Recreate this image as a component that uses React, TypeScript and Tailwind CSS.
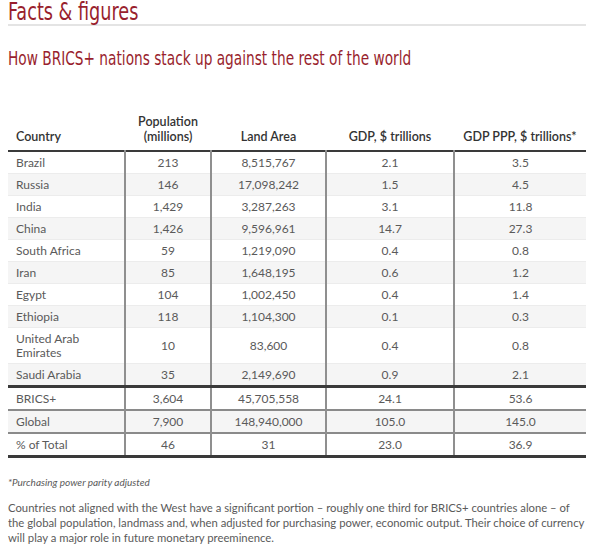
const rows: [string, string, string, string, string][] = [
  ["Brazil", "213", "8,515,767", "2.1", "3.5"],
  ["Russia", "146", "17,098,242", "1.5", "4.5"],
  ["India", "1,429", "3,287,263", "3.1", "11.8"],
  ["China", "1,426", "9,596,961", "14.7", "27.3"],
  ["South Africa", "59", "1,219,090", "0.4", "0.8"],
  ["Iran", "85", "1,648,195", "0.6", "1.2"],
  ["Egypt", "104", "1,002,450", "0.4", "1.4"],
  ["Ethiopia", "118", "1,104,300", "0.1", "0.3"],
  ["United Arab Emirates", "10", "83,600", "0.4", "0.8"],
  ["Saudi Arabia", "35", "2,149,690", "0.9", "2.1"],
];

const totals: [string, string, string, string, string][] = [
  ["BRICS+", "3,604", "45,705,558", "24.1", "53.6"],
  ["Global", "7,900", "148,940,000", "105.0", "145.0"],
  ["% of Total", "46", "31", "23.0", "36.9"],
];

const cell = "border-l-2 border-[#8f8f8f] text-center px-2 py-[3.5px]";

export default function App() {
  return (
    <div className="bg-white w-[602px] h-[544px] overflow-hidden font-['Lato',sans-serif] text-[#5a5a5a]">
      <div className="ml-2 w-[578px]">
        {/* heading */}
        <div className="border-b-2 border-[#e4e4e4] h-[26px]">
          <h1 className="font-['DejaVu_Sans_Condensed',sans-serif] text-[#991f2e] text-[25px] leading-[23px] origin-left scale-x-[0.785] whitespace-nowrap">
            Facts &amp; figures
          </h1>
        </div>
        <h2 className="font-['DejaVu_Sans_Condensed',sans-serif] text-[#991f2e] text-[20px] leading-[24px] mt-[20px] origin-left scale-x-[0.762] whitespace-nowrap">
          How BRICS+ nations stack up against the rest of the world
        </h2>

        {/* table */}
        <table className="mt-[44px] w-full border-collapse text-[12px] leading-[14px]">
          <colgroup>
            <col className="w-[117px]" />
            <col className="w-[86px]" />
            <col className="w-[115px]" />
            <col className="w-[128px]" />
            <col className="w-[132px]" />
          </colgroup>
          <thead>
            <tr className="border-b-2 border-[#3a3a3a] text-[#333] text-[12.5px] leading-[15px]">
              <th className="text-left font-semibold align-bottom px-2 pb-[6px]">Country</th>
              <th className="font-semibold align-bottom pb-[6px]">
                Population
                <br />
                (millions)
              </th>
              <th className="font-semibold align-bottom pb-[6px]">Land Area</th>
              <th className="font-semibold align-bottom pb-[6px]">GDP, $ trillions</th>
              <th className="font-semibold align-bottom pb-[6px]">GDP PPP, $ trillions*</th>
            </tr>
          </thead>
          <tbody>
            {rows.map((r, i) => (
              <tr
                key={r[0]}
                className={
                  (i % 2 === 1 ? "bg-[#f5f5f5] " : "bg-white ") +
                  (i === rows.length - 1 ? "border-b-[3px] border-[#3a3a3a]" : "border-b border-[#ececec]")
                }
              >
                <td className="px-2 py-[3.5px] text-left">
                  {r[0] === "United Arab Emirates" ? (
                    <>
                      United Arab
                      <br />
                      Emirates
                    </>
                  ) : (
                    r[0]
                  )}
                </td>
                <td className={cell}>{r[1]}</td>
                <td className={cell}>{r[2]}</td>
                <td className={cell}>{r[3]}</td>
                <td className={cell}>{r[4]}</td>
              </tr>
            ))}
            {totals.map((r, i) => (
              <tr
                key={r[0]}
                className={
                  (i === 1 ? "bg-[#f5f5f5] " : "bg-white ") +
                  (i === 2 ? "border-b-[3px] border-[#3a3a3a]" : "border-b-2 border-[#8a8a8a]")
                }
              >
                <td className="px-2 py-[3.5px] text-left">{r[0]}</td>
                <td className={cell}>{r[1]}</td>
                <td className={cell}>{r[2]}</td>
                <td className={cell}>{r[3]}</td>
                <td className={cell}>{r[4]}</td>
              </tr>
            ))}
          </tbody>
        </table>

        <p className="mt-[18px] text-[10px] italic leading-[13px]">*Purchasing power parity adjusted</p>
        <p className="mt-[11px] text-[11.3px] leading-[15px]">
          Countries not aligned with the West have a significant portion – roughly one third for BRICS+ countries alone – of
          the global population, landmass and, when adjusted for purchasing power, economic output. Their choice of currency
          will play a major role in future monetary preeminence.
        </p>
      </div>
    </div>
  );
}
